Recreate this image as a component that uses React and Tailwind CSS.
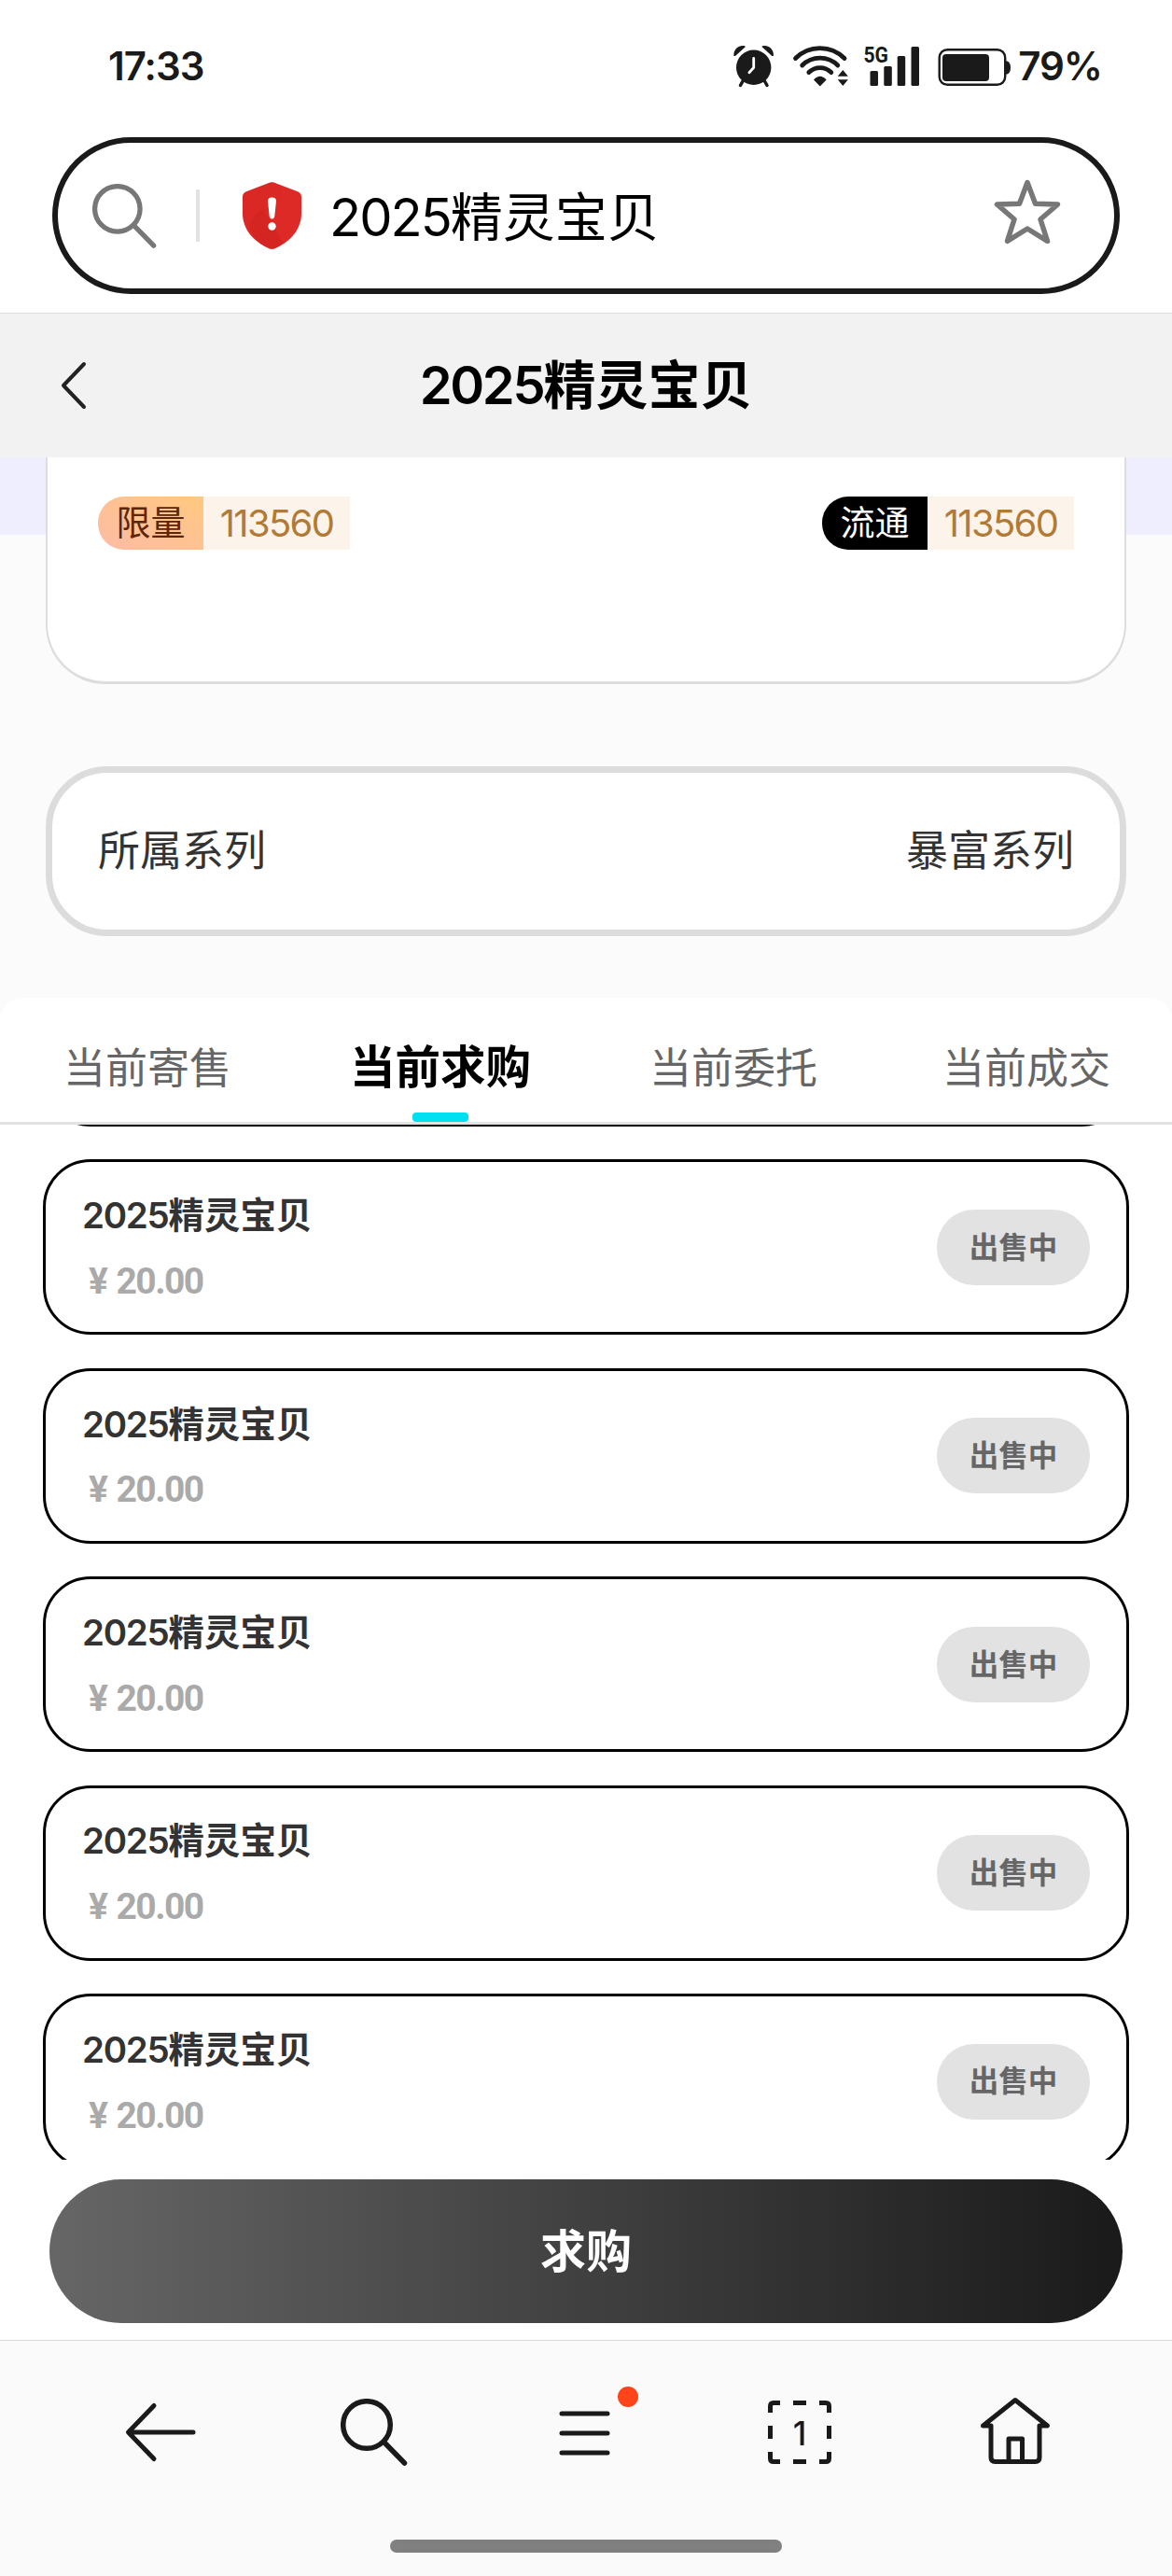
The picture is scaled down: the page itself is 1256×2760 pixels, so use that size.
const tabs = ['当前寄售', '当前求购', '当前委托', '当前成交']
const activeTab = '当前求购'

const orders = [1, 2, 3, 4, 5].map((id) => ({ id, price: '20.00' }))

const StatusIcons = () => (
  <svg className="w-[300px] h-[56px]" viewBox="784 43 300 56" fill="#1a1a1a">
    {/* alarm */}
    <circle cx="806.7" cy="72.3" r="18.7" />
    <path d="M785.5 60c-1-6 4-12 11-11l1.5 1-11 10z" />
    <path d="M827.8 60c1-6-4-12-11-11l-1.5 1 11 10z" />
    <path d="M795 87l-2.5 4.5M818.5 87l2.5 4.5" stroke="#1a1a1a" strokeWidth="3.5" strokeLinecap="round" />
    <path d="M806.7 62.5v10l-4.800 5.300" stroke="#fff" strokeWidth="2.8" fill="none" strokeLinecap="round" />
    {/* wifi */}
    <g fill="none" stroke="#1a1a1a" strokeWidth="4.800" strokeLinecap="round">
      <path d="M851.5 62.5a37 37 0 0 1 52.500 0" />
      <path d="M858.7 70a27 27 0 0 1 38.100 0" />
      <path d="M865.8 77.5a17 17 0 0 1 24 0" />
    </g>
    <path d="M871 85.500q6.800-7.500 13.600 0l-6.800 7z" />
    <path d="M902.3 75l5.600 6.800h-11.200zM902.300 92l5.600-6.800h-11.200z" />
    {/* signal */}
    <rect x="931.5" y="76" width="8.500" height="16" rx="1.500" />
    <rect x="946.3" y="71" width="8.500" height="21" rx="1.500" />
    <rect x="960.7" y="60" width="8.500" height="32" rx="1.500" />
    <rect x="975.5" y="50" width="8.500" height="42" rx="1.500" />
    <text x="924.5" y="66.500" fontFamily="Roboto" fontWeight="700" fontSize="24" textLength="26.500" lengthAdjust="spacingAndGlyphs">5G</text>
    {/* battery */}
    <rect x="1005.7" y="53.200" width="70.500" height="37.600" rx="8.500" fill="none" stroke="#1a1a1a" strokeWidth="2.400" />
    <rect x="1009" y="58" width="50" height="29" rx="4" />
    <path d="M1077 65.500h1.500q3.500 1.500 3.500 7t-3.500 7h-1.500z" />
  </svg>
)

const SearchIcon = ({ className }) => (
  <svg className={className} viewBox="0 0 72 72" fill="none" stroke="currentColor" strokeWidth="5.500" strokeLinecap="round">
    <circle cx="28" cy="28" r="25.300" />
    <path d="M47 47l21.500 22" />
  </svg>
)

const ShieldIcon = () => (
  <svg className="w-[63px] h-[72px]" viewBox="0 0 63 72">
    <path d="M29.500.6q2-.8 4 0L59 10.200q4 1.600 4 5.800v18c0 15-10 29.500-28.500 37.200q-3 1.300-6 0C10 63.500 0 49 0 34V16q0-4.200 4-5.800z" fill="#dd2a27" />
    <path d="M33.500.6L42 6.500c-2 15-10 20-20 27S9 41 7 50C2 43 0 38 0 31V16q0-4.200 4-5.800L29.500.6z" fill="#d4231f" opacity=".25" />
    <path d="M7 50c2-12 8-17 15-20l22 35-9.500 6.200q-3 1.300-6 0Q14 65 7 50z" fill="#c9201d" opacity=".45" />
    <path d="M27 20.500q0-4 4.500-4t4.500 4l-1.700 16q-.3 3-2.800 3t-2.800-3z" fill="#fff" />
    <circle cx="31.500" cy="47.500" r="4.200" fill="#fff" />
  </svg>
)

const StarIcon = () => (
  <svg className="mb-[8px] w-[72px] h-[70px]" viewBox="0 0 72 70" fill="none" stroke="#777" strokeWidth="5.500" strokeLinejoin="round">
    <path d="M36 3.500L44.500 26.300L68.500 27L50 43L57.500 66.300L36 53L14.500 66.300L22 43L3.500 27L27.500 26.300z" />
  </svg>
)

const Badge = ({ label, value, labelClass }) => (
  <div className="flex h-[57px] items-stretch">
    <span className={`flex w-[113px] items-center justify-center rounded-l-[28px] text-[37px] ${labelClass}`}>
      {label}
    </span>
    <span className="flex w-[157px] items-center justify-center bg-[#fcf4eb] text-[40px] tracking-[-1.7px] text-[#b27a35]">
      {value}
    </span>
  </div>
)

const OrderCard = ({ price }) => (
  <div className="flex h-[188.4px] shrink-0 items-center justify-between rounded-[51px] border-[3px] border-black bg-white pl-[39px] pr-[39px]">
    <div className="flex flex-col pt-[3px]">
      <p className="flex h-[56px] items-center text-[38.5px] font-bold text-[#333]">
        <span className="font-semibold tracking-[-1.3px]">2025</span>精灵宝贝
      </p>
      <p className="mt-[15px] flex h-[56px] items-center gap-[10px] pl-[7px] font-[Roboto] text-[39px] font-bold tracking-[-1.5px] text-[#aaa]">
        <span>¥</span>
        <span>{price}</span>
      </p>
    </div>
    <button className="h-[81px] w-[164px] rounded-[40px] bg-[#e2e2e2] text-[31.5px] font-bold text-[#666]">出售中</button>
  </div>
)

const App = () => {
  return (
    <div className="flex h-[2760px] w-[1256px] flex-col overflow-hidden bg-white font-[Inter,'Noto_Sans_CJK_SC',sans-serif] leading-none">
      {/* status bar */}
      <div className="flex h-[147px] shrink-0 items-start justify-between pl-[116px] pr-[75px] pt-[43px] text-[#1a1a1a]">
        <span className="flex h-[56px] items-center text-[42px] font-semibold tracking-[-1px]">17:33</span>
        <div className="flex items-center gap-[6px]">
          <StatusIcons />
          <span className="text-[42px] font-semibold tracking-[-1px]">79%</span>
        </div>
      </div>

      {/* address bar */}
      <div className="h-[189px] shrink-0 border-b border-[#ddd] px-[56px]">
        <div className="flex h-[168px] items-center rounded-full border-[6px] border-[#1a1a1a] pl-[37px] pr-[57px]">
          <SearchIcon className="h-[69px] w-[69px] text-[#777]" />
          <div className="ml-[42px] h-[56px] w-[4px] bg-[#e2e2e2]" />
          <div className="ml-[46px]">
            <ShieldIcon />
          </div>
          <p className="ml-[30px] flex flex-1 items-center pt-[3px] text-[56px] text-black">
            <span className="tracking-[-2px]">2025</span>精灵宝贝
          </p>
          <StarIcon />
        </div>
      </div>

      {/* page header */}
      <header className="relative flex h-[154px] shrink-0 items-center justify-center bg-[#f2f2f2]">
        <svg className="absolute left-[64px] top-[51px] h-[52px] w-[30px]" viewBox="0 0 30 52" fill="none" stroke="#222" strokeWidth="4" strokeLinecap="round" strokeLinejoin="round">
          <path d="M26 3L4 26l22 23" />
        </svg>
        <h1 className="flex items-center text-[56px] font-bold text-black">
          <span className="font-semibold tracking-[-2.3px]">2025</span>精灵宝贝
        </h1>
      </header>

      <section className="h-[579px] shrink-0 bg-[linear-gradient(#eeeeff_83px,#fbfbfb_83px)] px-[49px]">
        <div className="flex h-[243px] justify-between rounded-b-[64px] border-x-[2.5px] border-b-[3px] border-[#ddd] bg-white px-[54px] pt-[42px]">
          <Badge label="限量" value="113560" labelClass="bg-gradient-to-tr from-[#fdbba5] to-[#ffc87e] text-[#5c2609]" />
          <Badge label="流通" value="113560" labelClass="bg-black text-white" />
        </div>
        <div className="mt-[88px] flex h-[182px] items-center justify-between rounded-[66px] border-[7px] border-[#dcdcdc] bg-white px-[49px] pb-[2px] text-[45px] text-[#333]">
          <span>所属系列</span>
          <span>暴富系列</span>
        </div>
      </section>

      {/* tabs */}
      <div className="shrink-0 bg-[#fbfbfb]">
        <div className="flex h-[136px] rounded-t-[24px] border-b-[3px] border-[#e2e2e2] bg-white">
          {tabs.map((tab) => (
            <div key={tab} className="relative flex flex-1 justify-center pl-[2px] pt-[45px]">
              <span className={tab === activeTab ? 'flex h-[60px] items-center text-[48.5px] font-bold text-black' : 'flex h-[60px] items-center text-[45px] text-[#666]'}>
                {tab}
              </span>
              {tab === activeTab && <div className="absolute bottom-0 h-[10px] w-[60px] rounded-[4px] bg-[#00e0f0]" />}
            </div>
          ))}
        </div>
      </div>

      {/* scrolled list, the first row only shows its bottom edge */}
      <div className="flex h-[1109px] shrink-0 flex-col gap-[35.1px] overflow-hidden px-[46px]">
        <div className="-mt-[186.4px] h-[188.4px] shrink-0 rounded-[51px] border-[3px] border-black bg-white" />
        {orders.map((order) => (
          <OrderCard key={order.id} price={order.price} />
        ))}
      </div>

      <div className="h-[193px] shrink-0 bg-white px-[53px] pt-[21px]">
        <button className="h-[154px] w-full rounded-full bg-[linear-gradient(90deg,#666,#1a1a1a)] text-[49px] font-bold text-white">求购</button>
      </div>

      {/* browser toolbar */}
      <nav className="flex flex-1 flex-col items-center border-t border-[#d9d9d9] bg-[#fafafa] text-[#1a1a1a]">
        <div className="flex h-[213px] w-full items-start pl-[132px] pt-[60px]">
          <svg className="h-[76px] w-[80px]" viewBox="132 2568 80 76" fill="none" stroke="currentColor" strokeWidth="5" strokeLinecap="round" strokeLinejoin="round">
            <path d="M165 2577.500L137.500 2606L165 2634.500M138 2606H207" />
          </svg>
          <SearchIcon className="ml-[153px] mt-[2px] h-[72px] w-[72px]" />
          <div className="relative ml-[162px]">
            <svg className="h-[76px] w-[56px]" viewBox="0 0 56 76" fill="none" stroke="currentColor" strokeWidth="5" strokeLinecap="round">
              <path d="M3 18h49M3 39h49M3 60h49" />
            </svg>
            <div className="absolute left-[63px] -top-[11px] h-[22px] w-[22px] rounded-full bg-[#ff431a]" />
          </div>
          <div className="relative ml-[167px]">
            <svg className="h-[76px] w-[70px]" viewBox="0 0 70 76" fill="none" stroke="currentColor" strokeWidth="5">
              <path d="M3.500 17V10q0-3.500 3.500-3.500h7M28 6.500h14M56 6.500h7q3.500 0 3.500 3.500v7M66.500 31v14M66.500 59v7q0 3.500-3.500 3.500h-7M42 69.500H28M14 69.500H7q-3.500 0-3.500-3.500v-7M3.500 45V31" />
            </svg>
            <span className="absolute inset-0 flex items-center justify-center pt-[2px] text-[35px] font-medium">1</span>
          </div>
          <svg className="ml-[156px] h-[76px] w-[80px]" viewBox="1048 2568 80 76" fill="none" stroke="currentColor" strokeWidth="5" strokeLinecap="round" strokeLinejoin="round">
            <path d="M1062 2599h-8.500L1088 2571.500L1122.500 2599h-8.500v34q0 4.500-4.500 4.500h-43q-4.500 0-4.500-4.500z" />
            <path d="M1081 2637v-24h14.500v24" />
          </svg>
        </div>
        <div className="h-[14px] w-[420px] rounded-[7px] bg-[#808080]" />
      </nav>
    </div>
  )
}

export default App
